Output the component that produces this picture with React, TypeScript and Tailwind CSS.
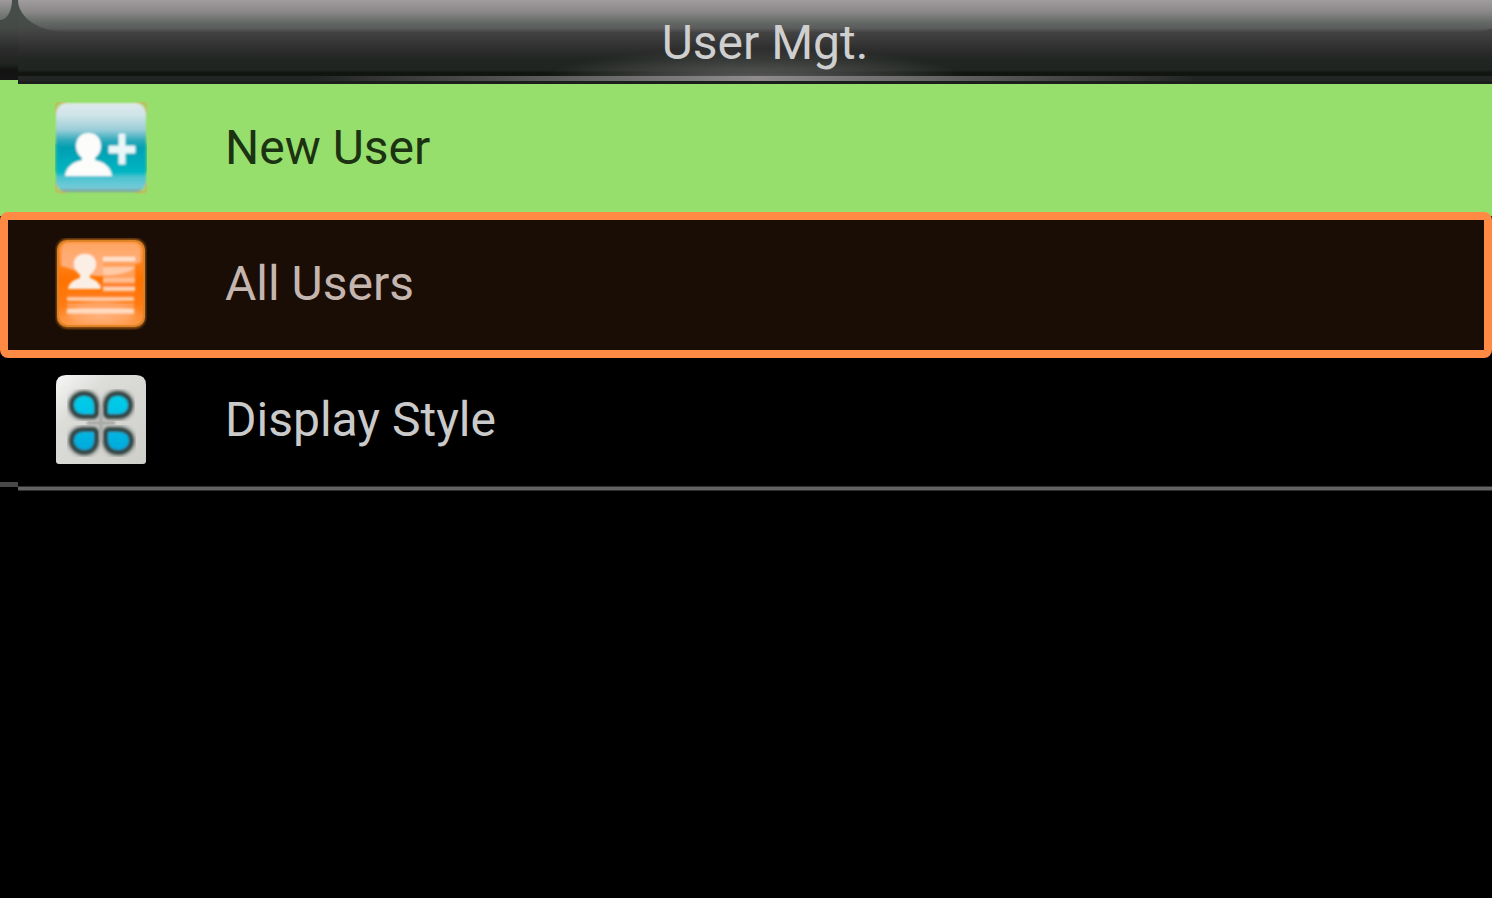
import React, { FC } from "react";
import clsx from "clsx";

const NewUserIcon: FC = () => (
  <svg viewBox="0 0 92 92" className="size-[92px] shrink-0" aria-hidden="true">
    <defs>
      <linearGradient id="teal" x1="0" y1="0" x2="0" y2="1">
        <stop offset="0" stopColor="#dfeaec" />
        <stop offset="0.14" stopColor="#cfe3e8" />
        <stop offset="0.3" stopColor="#9bced9" />
        <stop offset="0.42" stopColor="#2fa9bb" />
        <stop offset="0.5" stopColor="#049fb2" />
        <stop offset="0.78" stopColor="#00b6c3" />
        <stop offset="0.83" stopColor="#4cc2d0" />
        <stop offset="0.95" stopColor="#72cbd9" />
        <stop offset="1" stopColor="#7d9c94" />
      </linearGradient>
      <filter id="tealSoft" x="-10%" y="-10%" width="120%" height="120%">
        <feGaussianBlur stdDeviation="0.8" />
      </filter>
    </defs>
    <g filter="url(#tealSoft)">
      <path d="M1 12V4Q1 1 4 1H12M80 1H88Q91 1 91 4V12M1 80V87Q1 90 4 90H12M80 90H88Q91 90 91 87V80" fill="none" stroke="#d0b04e" strokeWidth="2" />
      <rect x="1" y="1" width="90" height="89" rx="11" fill="url(#teal)" />
      <path d="M1 42v28M91 42v28" stroke="#12b9a0" strokeWidth="2" />
      <path
        d="M33.500 31 C42 31 46 37 46 44 C46 50 43 53 40 56 V58 C49 60 56 65 57 74 H10 C11 65 18 60 27 58 V56 C24 53 21 50 21 44 C21 37 25 31 33.500 31Z"
        fill="#fcfcfb"
      />
      <path d="M64 32h6v12h10v7H70v11h-6V51H54v-7h10z" fill="#e9f7f8" stroke="#e9f7f8" strokeLinejoin="round" />
    </g>
  </svg>
);

const AllUsersIcon: FC = () => (
  <svg viewBox="0 0 92 92" className="size-[92px] shrink-0" aria-hidden="true">
    <defs>
      <linearGradient id="orange" x1="0" y1="0" x2="0" y2="1">
        <stop offset="0" stopColor="#ff9138" />
        <stop offset="0.45" stopColor="#ff7200" />
        <stop offset="0.75" stopColor="#ff7a10" />
        <stop offset="1" stopColor="#ff9a48" />
      </linearGradient>
      <linearGradient id="shine" x1="0" y1="0" x2="0" y2="1">
        <stop offset="0" stopColor="#ffa665" />
        <stop offset="1" stopColor="#ffb384" />
      </linearGradient>
      <radialGradient id="base" cx="0.5" cy="0.75" r="0.5">
        <stop offset="0" stopColor="#ffb17c" />
        <stop offset="0.7" stopColor="#ffa25c" />
        <stop offset="1" stopColor="#ff9a48" stopOpacity="0" />
      </radialGradient>
      <filter id="orangeSoft" x="-10%" y="-10%" width="120%" height="120%">
        <feGaussianBlur stdDeviation="1" />
      </filter>
    </defs>
    <rect x="1" y="0" width="90" height="91" rx="12" fill="#8a4c0e" filter="url(#orangeSoft)" />
    <rect x="2" y="2" width="88" height="87" rx="10" fill="#dc8328" />
    <rect x="4" y="4" width="84" height="83" rx="9" fill="url(#orange)" />
    <g filter="url(#orangeSoft)">
      <path d="M6 14 Q6 5 14 5 H78 Q86 5 86 14 V24 C74 28 65 37 48 38 C31 39 20 31 6 28Z" fill="url(#shine)" />
      <rect x="6" y="52" width="80" height="34" rx="8" fill="url(#base)" />
      <path d="M48 17h32v36H48z" fill="#ffa05a" />
      <path d="M48 29h32c-4 5-18 9-32 8z" fill="#ffcaa6" />
      <path d="M48 42h32" stroke="#ffbd90" strokeWidth="4" />
      <path d="M45 47h35M12 56h67" stroke="#ff7d1d" strokeWidth="3" />
      <path d="M48 51h32" stroke="#ffd2b2" strokeWidth="4" />
      <path d="M48 21h32" stroke="#ffe1cc" strokeWidth="5" />
      <path d="M12 61h67" stroke="#ffc9a4" strokeWidth="4" />
      <path d="M12 67h67" stroke="#ffa466" strokeWidth="3" />
      <path d="M12 73h67" stroke="#ffdcc1" strokeWidth="5" />
      <path
        d="M30 16 C37 16 41 20 41 26 C41 31 38 34 35 37 V40 C41 42 45 45 46 51 H13 C14 45 18 42 25 40 V37 C22 34 19 31 19 26 C19 20 23 16 30 16Z"
        fill="#fbefe5"
      />
    </g>
  </svg>
);

const petals = [
  "M39 42 H29 C21 42 17 37 17 31 C17 24 23 20 29 20 C37 20 41 25 41 33 V40Z",
  "M53 42 H63 C71 42 75 37 75 31 C75 24 69 20 63 20 C55 20 51 25 51 33 V40Z",
  "M39 56 H29 C21 56 17 60 17 67 C17 73 23 78 29 78 C37 78 41 73 41 65 V58Z",
  "M53 56 H63 C71 56 76 60 76 67 C76 73 70 78 64 78 C55 78 51 73 51 65 V58Z",
];

const DisplayStyleIcon: FC = () => (
  <svg viewBox="0 0 92 92" className="size-[92px] shrink-0" aria-hidden="true">
    <defs>
      <linearGradient id="plate" x1="0" y1="0" x2="1" y2="1">
        <stop offset="0" stopColor="#f7f7f7" />
        <stop offset="0.3" stopColor="#dcdcd9" />
        <stop offset="1" stopColor="#cfcfca" />
      </linearGradient>
      <linearGradient id="cyan" gradientUnits="userSpaceOnUse" x1="0" y1="19" x2="0" y2="79">
        <stop offset="0" stopColor="#00d0ea" />
        <stop offset="1" stopColor="#00a8dc" />
      </linearGradient>
      <filter id="shadow" x="-20%" y="-20%" width="140%" height="140%">
        <feGaussianBlur stdDeviation="2" />
      </filter>
      <filter id="petalSoft" x="-20%" y="-20%" width="140%" height="140%">
        <feGaussianBlur stdDeviation="1" />
      </filter>
    </defs>
    <path d="M1 11 Q1 1 11 1 H81 Q91 1 91 11 V87 Q91 90 88 90 H4 Q1 90 1 87Z" fill="url(#plate)" />
    {petals.map((d) => (
      <path key={d} d={d} fill="#4b5552" stroke="#525b57" strokeWidth="7" strokeLinejoin="round" filter="url(#shadow)" />
    ))}
    <path d="M46 32V66M32 49H60" stroke="#a9aaa7" strokeWidth="4" filter="url(#petalSoft)" />
    {petals.map((d) => (
      <path key={d} d={d} fill="url(#cyan)" stroke="#33484a" strokeWidth="4" strokeLinejoin="round" filter="url(#petalSoft)" />
    ))}
  </svg>
);

const items = [
  { label: "New User", icon: <NewUserIcon />, className: "h-32 pl-[55px] bg-[#96df6d] text-[#1c3312]" },
  {
    label: "All Users",
    icon: <AllUsersIcon />,
    className: "h-[146px] rounded-lg border-8 border-[#ff8a43] bg-[#1a0d06] pb-0.5 pl-[47px] text-[#c4b6af]",
  },
  { label: "Display Style", icon: <DisplayStyleIcon />, className: "h-[124px] pl-[55px] text-[#cacaca]" },
];

const App: FC = () => {
  return (
    <div className="min-h-screen bg-black font-['Roboto',sans-serif] text-[48px] leading-[56px]">
      <header className="flex h-[84px] items-start bg-[#96df6d]">
        {/* edge of the neighbouring panel */}
        <div className="relative h-20 w-[18px] shrink-0 bg-[linear-gradient(#48504b_0px,#444946_28px,#2c2c2c_48px,#202420_64px,#111311_70px,#151515_80px)]">
          <div className="absolute top-0 left-0 h-5 w-3 rounded-br-[12px_20px] bg-linear-to-b from-[#9f9b9c] to-[#686c6a]" />
        </div>
        <div className="relative h-[84px] flex-1 overflow-hidden bg-[linear-gradient(#48504b_0px,#464b48_26px,#424242_33px,#2d2d2d_50px,#212622_60px,#202420_70px,#101410_73px,#171a18_84px)]">
          <div className="absolute top-0 -right-6 left-0 h-8 rounded-br-[44px_32px] rounded-bl-[48px_32px] bg-[linear-gradient(#a19d9e_0px,#898788_12px,#656b67_22px,#5b5c5b_28px,#464646_32px)]" />
          <div className="absolute inset-x-0 bottom-0 h-10 bg-[radial-gradient(ellipse_220px_36px_at_50%_100%,#666666,transparent)]" />
          <div className="absolute inset-x-0 bottom-[3px] h-[5px] bg-[linear-gradient(90deg,#232524_20%,#6a696a_40%,#8e8c8d_50%,#6a696a_61%,#232524_80%)]" />
          <div className="absolute inset-x-0 bottom-0 h-[3px] bg-[#1b1f1b]" />
          <h1 className="relative pt-[15px] pl-5 text-center text-[#cfcfcf]">User Mgt.</h1>
        </div>
      </header>

      <nav className="flex flex-col bg-[linear-gradient(#96df6d_132px,#000000_132px)]">
        {items.map((item) => (
          <button
            key={item.label}
            type="button"
            className={clsx("flex w-full items-center gap-[78px] text-left", item.className)}
          >
            {item.icon}
            <span>{item.label}</span>
          </button>
        ))}
      </nav>

      <div className="flex items-start">
        <div className="h-[5px] w-[18px] bg-[#484848]" />
        <div className="mt-1 h-[5px] flex-1 border-y border-[#303030] bg-[#636363]" />
      </div>
    </div>
  );
};

export default App;
